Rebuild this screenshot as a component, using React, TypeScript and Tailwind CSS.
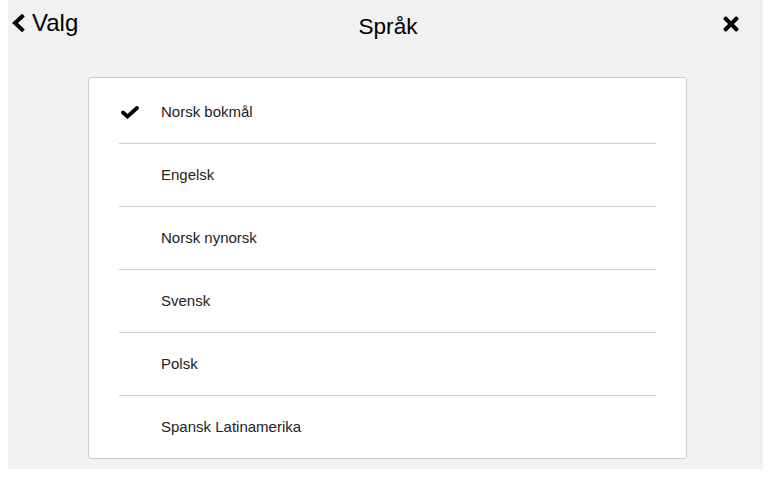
import { FaTimes } from 'react-icons/fa'

const languages = [
  { label: 'Norsk bokmål', selected: true },
  { label: 'Engelsk' },
  { label: 'Norsk nynorsk' },
  { label: 'Svensk' },
  { label: 'Polsk' },
  { label: 'Spansk Latinamerika' },
]

function Chevron() {
  return (
    <svg width="14" height="18" viewBox="0 0 14 18" className="shrink-0">
      <path d="M11 2.5 L4 9 L11 15.5" fill="none" stroke="currentColor" strokeWidth="4" strokeLinecap="square" strokeLinejoin="miter" />
    </svg>
  )
}

function Check() {
  return (
    <svg width="18" height="13" viewBox="0 0 18 13">
      <path d="M2 6.5 L6.5 10.5 L16 2" fill="none" stroke="currentColor" strokeWidth="3.8" strokeLinecap="round" strokeLinejoin="miter" />
    </svg>
  )
}

export default function App() {
  return (
    <div className="bg-white pl-[8px] pr-[10px] pb-[10px] font-['Liberation_Sans',Arial,sans-serif] text-[#222]">
      <div className="bg-[#f1f1f1] h-[469px] flex flex-col">
        {/* header */}
        <div className="grid grid-cols-[1fr_auto_1fr] items-center h-[46px]">
          <button className="ml-[3px] flex items-center gap-[7px] text-[24px] leading-none justify-self-start text-black">
            <Chevron />
            <span>Valg</span>
          </button>
          <h1 className="ml-[5px] text-[22.6px] leading-none pt-[8px] text-black">Språk</h1>
          <button className="mr-[21px] justify-self-end pt-[1px] text-black">
            <FaTimes size={22} />
          </button>
        </div>

        <div className="ml-[80px] mt-[31px] w-[599px] bg-white border border-[#cccccc] rounded-[3px] pt-[3px] px-[30px]">
          {languages.map((lang, i) => (
            <div
              key={lang.label}
              className={
                'flex items-center h-[62px] text-[15px] ' +
                (i < languages.length - 1 ? 'border-b border-[#cccccc] h-[63px]' : '')
              }
            >
              <span className="w-[42px] pl-[2px] flex items-center text-black">
                {lang.selected && <Check />}
              </span>
              <span>{lang.label}</span>
            </div>
          ))}
        </div>
      </div>
    </div>
  )
}
